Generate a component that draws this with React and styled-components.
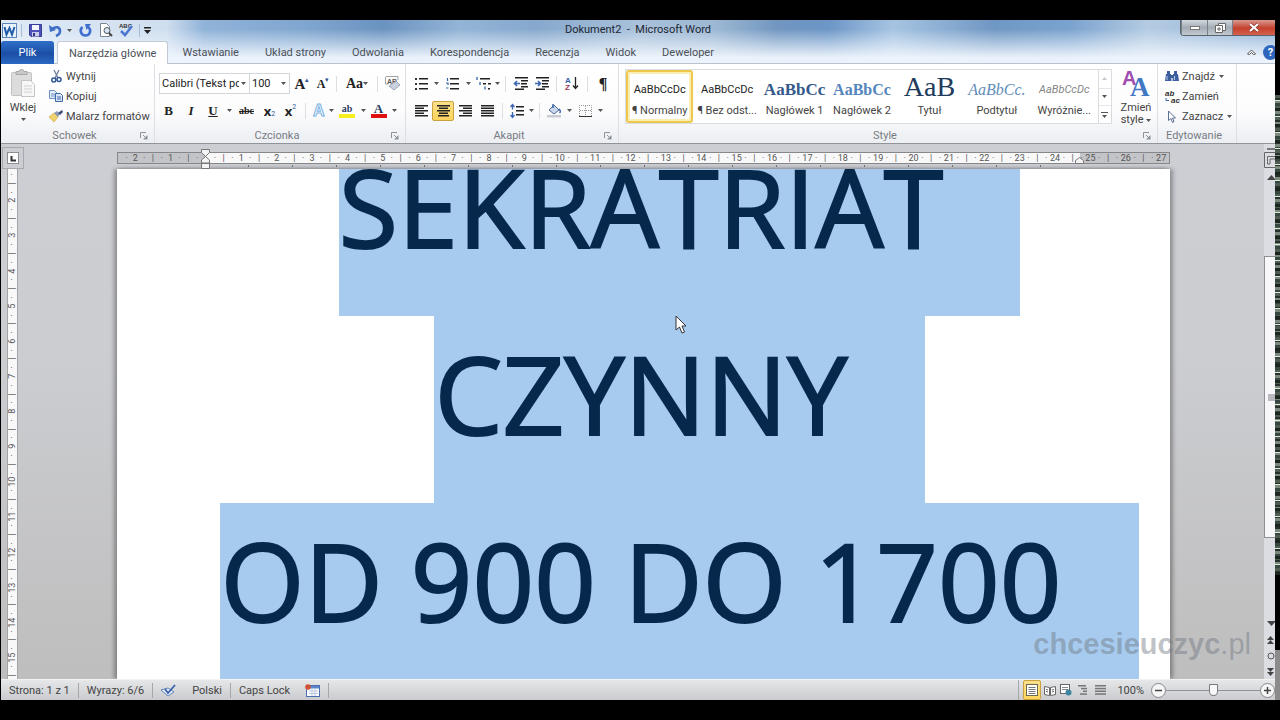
import React, { useState } from 'react'
import styled, { createGlobalStyle, css } from 'styled-components'

const Caret = () => (
    <svg width="5" height="3" viewBox="0 0 5 3"><path d="M0 0h5L2.5 3z" fill="#555" /></svg>
)

const LauncherIcon = () => (
    <svg width="8" height="8" viewBox="0 0 8 8" fill="none" stroke="#8d939b">
        <path d="M.5 6V.5H6M3 3l3 3" /><path d="M7.5 3v4.5H3z" fill="#8d939b" stroke="none" />
    </svg>
)

const lines = (rows, color = '#222') => rows.map(([x, y, w]) => (
    <rect key={`${x}-${y}`} x={x} y={y} width={w} height="1.5" fill={color} />
))

const icons = {
    word: (
        <svg width="15" height="15" viewBox="0 0 15 15">
            <rect x=".5" y=".5" width="14" height="14" fill="#e9f3fc" stroke="#5b86bd" />
            <path d="M2.500 4l2 7.500L7.500 5l2.500 6.500L12.500 4" fill="none" stroke="#1f5ca8" strokeWidth="2" />
        </svg>
    ),
    save: (
        <svg width="13" height="13" viewBox="0 0 13 13">
            <path d="M.5.5h12v12H2l-1.500-1.500z" fill="#4d53b8" stroke="#363b94" />
            <rect x="3" y="1" width="7" height="5" fill="#f4f6ff" />
            <rect x="3" y="8" width="7" height="4.500" fill="#c9cdea" /><rect x="4" y="9" width="2" height="3" fill="#32387f" />
        </svg>
    ),
    undo: (
        <svg width="13" height="13" viewBox="0 0 13 13">
            <path d="M3 5c4-3 8-2 8 2 0 2-1.500 4-4 5" fill="none" stroke="#3f6fc6" strokeWidth="2.600" />
            <path d="M0 1l1 7 6-2z" fill="#3f6fc6" />
        </svg>
    ),
    redo: (
        <svg width="13" height="13" viewBox="0 0 13 13">
            <path d="M3.500 3C0 6 2 11.500 6.500 11.500S13 6 9 3" fill="none" stroke="#3f6fd0" strokeWidth="2.600" />
            <path d="M6 0h6l-4.500 6z" fill="#3f6fd0" />
        </svg>
    ),
    preview: (
        <svg width="14" height="14" viewBox="0 0 14 14">
            <path d="M1.500.5h6l3 3v10h-9z" fill="#fff" stroke="#7b8494" />
            <circle cx="8" cy="7.500" r="3" fill="#d4e6f7" stroke="#555" /><path d="M10 10l3 3" stroke="#444" strokeWidth="2" />
        </svg>
    ),
    spell: (
        <svg width="15" height="14" viewBox="0 0 15 14">
            <text x="1" y="5" fontSize="6" fontWeight="700" fontFamily="Liberation Sans" fill="#333">ABC</text>
            <path d="M3 8l4 4 7-9" fill="none" stroke="#4d78cf" strokeWidth="2.500" />
        </svg>
    ),
    paste: (
        <svg width="26" height="29" viewBox="0 0 26 29">
            <rect x="1.500" y="3.500" width="20" height="23" rx="1" fill="#dcdcdc" stroke="#c2c2c2" />
            <path d="M6 5.500h11v-3h-3a2.500 2 0 0 0-5 0H6z" fill="#c9c9c9" stroke="#a8a8a8" />
            <path d="M11.500 11.500h9l4 4v12h-13z" fill="#f7f7f7" stroke="#c4c4c4" />
            <path d="M14 17h8M14 20h8M14 23h8" stroke="#d0d0d0" />
        </svg>
    ),
    cut: (
        <svg width="11" height="13" viewBox="0 0 11 13" fill="none">
            <path d="M3 0l4 8M8 0L4 8" stroke="#6d7f99" strokeWidth="1.300" />
            <circle cx="2.800" cy="10" r="2" stroke="#2f5597" strokeWidth="1.500" /><circle cx="8" cy="9.500" r="2" stroke="#2f5597" strokeWidth="1.500" />
        </svg>
    ),
    copy: (
        <svg width="14" height="12" viewBox="0 0 14 12">
            <path d="M.5.5h5l2 2v6h-7z" fill="#e4eefb" stroke="#6c8fc6" /><path d="M2 4h4M2 6h4" stroke="#6c8fc6" />
            <path d="M6.500 3.500h5l2 2v6h-7z" fill="#dbe8fa" stroke="#3f66a8" /><path d="M8 7h4M8 9h4" stroke="#3f66a8" />
        </svg>
    ),
    painter: (
        <svg width="14" height="12" viewBox="0 0 14 12">
            <path d="M0 7l5-4 4 4-4 5z" fill="#f1d36b" stroke="#c79f34" strokeWidth=".6" />
            <path d="M5 3l3-2 3 3-2 3z" fill="#8e99b8" /><path d="M9 3l4-3 1 2-3 3z" fill="#3d4c77" />
        </svg>
    ),
    clear: (
        <svg width="16" height="15" viewBox="0 0 16 15">
            <text x="2" y="8" fontSize="7" fontWeight="700" fontFamily="Liberation Sans" fill="#555">AB</text>
            <path d="M4 10l7-5 4 4-6 5z" fill="#c9d0de" stroke="#8b95aa" strokeWidth=".8" /><path d="M.5 1v7h3M1 .5h12V4" fill="none" stroke="#8b8b8b" strokeWidth=".8" />
        </svg>
    ),
    bullets: (
        <svg width="13" height="12" viewBox="0 0 13 12">
            <rect y="0" width="2" height="2" fill="#333" /><rect y="5" width="2" height="2" fill="#333" /><rect y="10" width="2" height="2" fill="#333" />
            {lines([[4, 0, 9], [4, 5, 9], [4, 10, 9]])}
        </svg>
    ),
    numbering: (
        <svg width="13" height="12" viewBox="0 0 13 12">
            <path d="M1.500 0v3M0 5h2v2M0 10h2.500" stroke="#3762a8" fill="none" strokeWidth="1.200" />
            {lines([[4, 0, 9], [4, 5, 9], [4, 10, 9]])}
        </svg>
    ),
    multilevel: (
        <svg width="15" height="13" viewBox="0 0 15 13">
            <path d="M1 0v3M4 5v3M9 9.500v3" stroke="#3762a8" strokeWidth="1.300" />
            {lines([[4, 1, 10], [7, 6, 3], [12, 6, 3], [12, 11, 2]])}
        </svg>
    ),
    outdent: (
        <svg width="15" height="13" viewBox="0 0 15 13">
            {lines([[1, 0, 13], [7, 3, 7], [7, 6, 6], [7, 9, 7], [1, 11.500, 9]])}
            <path d="M6 6.500H1M3 4L.5 6.500 3 9" stroke="#3c66b0" fill="none" strokeWidth="1.600" />
        </svg>
    ),
    indent: (
        <svg width="15" height="13" viewBox="0 0 15 13">
            {lines([[1, 0, 13], [7, 3, 7], [7, 6, 6], [7, 9, 7], [1, 11.500, 9]])}
            <path d="M0 6.500h5M3 4l2.500 2.500L3 9" stroke="#3c66b0" fill="none" strokeWidth="1.600" />
        </svg>
    ),
    sort: (
        <svg width="14" height="15" viewBox="0 0 14 15">
            <text x="0" y="7" fontSize="8" fontWeight="700" fontFamily="Liberation Sans" fill="#3762a8">A</text>
            <text x="0" y="14" fontSize="8" fontWeight="700" fontFamily="Liberation Sans" fill="#9a3450">Z</text>
            <path d="M10.500 1v11M8 9.500l2.500 3 2.500-3" stroke="#222" strokeWidth="1.300" fill="none" />
        </svg>
    ),
    left: <svg width="13" height="12" viewBox="0 0 13 12">{lines([[0, 0, 13], [0, 2.500, 9], [0, 5, 13], [0, 7.500, 9], [0, 10, 13]])}</svg>,
    center: <svg width="13" height="12" viewBox="0 0 13 12">{lines([[0, 0, 13], [2, 2.500, 9], [0, 5, 13], [2, 7.500, 9], [1, 10, 11]])}</svg>,
    right: <svg width="13" height="12" viewBox="0 0 13 12">{lines([[0, 0, 13], [4, 2.500, 9], [0, 5, 13], [4, 7.500, 9], [0, 10, 13]])}</svg>,
    justify: <svg width="13" height="12" viewBox="0 0 13 12">{lines([[0, 0, 13], [0, 2.500, 13], [0, 5, 13], [0, 7.500, 13], [0, 10, 13]])}</svg>,
    spacing: (
        <svg width="14" height="14" viewBox="0 0 14 14">
            <path d="M2.500 1v4.500M.5 3l2-2.500 2 2.500M2.500 8v5M.5 11l2 2.500 2-2.500" stroke="#3c66b0" fill="none" strokeWidth="1.300" />
            {lines([[6, 2, 8], [6, 6, 8], [6, 10, 8]])}
        </svg>
    ),
    bucket: (
        <svg width="16" height="15" viewBox="0 0 16 15">
            <path d="M3 7l5-5 5 5-5 4z" fill="#c8d6ec" stroke="#54698f" /><path d="M7 5V1M13 6c2 2 1.500 3 .5 4" stroke="#3c66b0" fill="none" strokeWidth="1.500" />
            <rect x="1" y="12" width="14" height="2.500" fill="#c8ccd2" />
        </svg>
    ),
    border: (
        <svg width="13" height="12" viewBox="0 0 13 12" fill="none">
            <path d="M.5 11V.5h12V11M6.500 1v10M1 5.500h11" stroke="#999" strokeDasharray="1 1" /><path d="M0 11.500h13" stroke="#333" />
        </svg>
    ),
    changeStyles: (
        <svg width="28" height="29" viewBox="0 0 28 29">
            <text x="0" y="16" fontSize="20" fontWeight="700" fontFamily="Liberation Sans" fill="#a04cb0">A</text>
            <text x="8" y="27" fontSize="27" fontWeight="700" fontFamily="Liberation Serif" fill="#4178c4">A</text>
        </svg>
    ),
    find: (
        <svg width="14" height="12" viewBox="0 0 14 12" fill="#3d5f9e">
            <path d="M2 1h3v3H2zM9 1h3v3H9zM1 4h5l.5 7H0zM8 4h5l1 7H7.500zM5 5h4v3H5z" />
            <path d="M2 6v4M9.500 6v4" stroke="#b8cbe8" />
        </svg>
    ),
    replace: (
        <svg width="15" height="13" viewBox="0 0 15 13">
            <text x="0" y="6" fontSize="8" fontWeight="700" fontFamily="Liberation Sans" fill="#333">ab</text>
            <text x="6" y="13" fontSize="8" fontWeight="700" fontFamily="Liberation Sans" fill="#333">ac</text>
            <path d="M1 8v2.500h3" stroke="#3c66b0" fill="none" />
        </svg>
    ),
    select: (
        <svg width="11" height="13" viewBox="0 0 11 13">
            <path d="M1.500 1v9.500l2.500-2 1.500 4 1.500-.8-1.500-3.700h3z" fill="#fff" stroke="#5a6f94" />
        </svg>
    ),
    proof: (
        <svg width="16" height="13" viewBox="0 0 16 13">
            <path d="M0 6l7-2 6 4-6 4z" fill="#e8effa" stroke="#6482b8" /><path d="M4 5l3 4 7-8" fill="none" stroke="#3c62ae" strokeWidth="1.800" />
        </svg>
    ),
    macro: (
        <svg width="15" height="13" viewBox="0 0 15 13">
            <rect x="1.500" y="1.500" width="13" height="11" fill="#fff" stroke="#4a6fae" /><rect x="2" y="2" width="12" height="2.500" fill="#5b86cc" />
            <path d="M4 7h9M4 9.500h9M7 5v7M10 5v7" stroke="#b9c8e0" /><circle cx="3" cy="3" r="2.800" fill="#cf5236" />
        </svg>
    ),
    viewPrint: (
        <svg width="12" height="12" viewBox="0 0 12 12">
            <rect x=".5" y=".5" width="11" height="11" fill="#fff" stroke="#6e6a50" /><path d="M2.500 3.500h7M2.500 5.500h7M2.500 7.500h7M2.500 9.500h7" stroke="#777" />
        </svg>
    ),
    viewRead: (
        <svg width="12" height="11" viewBox="0 0 12 11" fill="#fff" stroke="#666">
            <path d="M.5 1.500l5 1v8l-5-1zM11.500 1.500l-5 1v8l5-1z" /><path d="M2 4.500l2 .5M2 6.500l2 .5M10 4.500L8 5M10 6.500L8 7" />
        </svg>
    ),
    viewWeb: (
        <svg width="12" height="12" viewBox="0 0 12 12">
            <rect x=".5" y=".5" width="9" height="9" fill="#fff" stroke="#666" /><path d="M2 3.500h6M2 5.500h6" stroke="#888" /><circle cx="8.500" cy="8.500" r="3" fill="#3e86a0" />
        </svg>
    ),
    viewOutline: <svg width="10" height="10" viewBox="0 0 10 10">{lines([[0, 0, 8], [3, 2.800, 6], [5, 5.500, 4], [2, 8.300, 7]], '#777')}</svg>,
    viewDraft: <svg width="11" height="10" viewBox="0 0 11 10">{lines([[0, 0, 11], [0, 2.800, 11], [0, 5.500, 11], [0, 8.300, 11]], '#777')}</svg>,
}

const tabs = ['Narzędzia główne', 'Wstawianie', 'Układ strony', 'Odwołania', 'Korespondencja', 'Recenzja', 'Widok', 'Deweloper']

const gallery = [
    { name: '¶ Normalny', sample: 'AaBbCcDc' },
    { name: '¶ Bez odst...', sample: 'AaBbCcDc' },
    { name: 'Nagłówek 1', sample: 'AaBbCc', kind: 'h1' },
    { name: 'Nagłówek 2', sample: 'AaBbCc', kind: 'h2' },
    { name: 'Tytuł', sample: 'AaB', kind: 'title' },
    { name: 'Podtytuł', sample: 'AaBbCc.', kind: 'subtitle' },
    { name: 'Wyróżnie...', sample: 'AaBbCcDc', kind: 'emphasis' },
]

const documentLines = ['SEKRATRIAT', 'CZYNNY', 'OD 900 DO 1700']

// ruler marks stand every quarter of a centimetre
const rulerMarks = (from, to) => {
    const marks = []
    for (let q = from * 4; q <= to * 4; q++) {
        if (q === 0) marks.push('')
        else if (q % 4 === 0) marks.push(String(Math.abs(q / 4)))
        else marks.push(q % 2 === 0 ? '|' : '·')
    }
    return marks
}

function Tool({ label, width, active, children }) {
    return <ToolButton type="button" aria-label={label} title={label} $w={width} $active={active}>{children}</ToolButton>
}

function Combo({ label, value, width }) {
    return (
        <ComboBox $w={width}>
            <select aria-label={label} defaultValue={value}><option>{value}</option></select>
            <Caret />
        </ComboBox>
    )
}

function Group({ title, width, grow, launcher = true, children }) {
    return (
        <GroupBox $w={width} $grow={grow}>
            <GroupBody>{children}</GroupBody>
            <GroupFooter>
                <span>{title}</span>
                {launcher && <Launcher type="button" aria-label={`${title}: więcej opcji`}><LauncherIcon /></Launcher>}
            </GroupFooter>
        </GroupBox>
    )
}

function TitleBar() {
    return (
        <TitleRow>
            <QuickAccess>
                {icons.word}
                <QuickSeparator />
                <Tool label="Zapisz" width={19}>{icons.save}</Tool>
                <Tool label="Cofnij" width={20}>{icons.undo}</Tool>
                <Tool label="Lista cofania" width={8}><Caret /></Tool>
                <Tool label="Powtórz" width={24}>{icons.redo}</Tool>
                <Tool label="Podgląd wydruku" width={18}>{icons.preview}</Tool>
                <Tool label="Pisownia" width={20}>{icons.spell}</Tool>
                <QuickSeparator />
                <Tool label="Dostosuj" width={7}>
                    <svg width="7" height="7" viewBox="0 0 7 7"><path d="M0 0h7v1.500H0zM0 3h7L3.500 7z" fill="#222" /></svg>
                </Tool>
            </QuickAccess>
            <Title>Dokument2&nbsp; -&nbsp; Microsoft Word</Title>
            <WindowButtons>
                <WindowButton type="button" aria-label="Minimalizuj" $w={26}>
                    <svg width="10" height="4" viewBox="0 0 10 4"><rect x=".5" y=".5" width="9" height="3" fill="#fff" stroke="#777" /></svg>
                </WindowButton>
                <WindowButton type="button" aria-label="Przywróć" $w={25}>
                    <svg width="11" height="10" viewBox="0 0 11 10" fill="#fff" stroke="#666"><path d="M3.500.5h7v7h-7z" /><path d="M.5 2.500h7v7h-7z" /><path d="M3 5h2v2H3z" /></svg>
                </WindowButton>
                <WindowButton type="button" aria-label="Zamknij" $w={43} $close>
                    <svg width="10" height="9" viewBox="0 0 10 9"><path d="M1 1l8 7M9 1L1 8" stroke="#803028" strokeWidth="3.500" /><path d="M1 1l8 7M9 1L1 8" stroke="#fff" strokeWidth="2.200" /></svg>
                </WindowButton>
            </WindowButtons>
        </TitleRow>
    )
}

function Ribbon() {
    const [style, setStyle] = useState(gallery[0].name)

    return (
        <RibbonBar>
            <Group title="Schowek" width={154}>
                <BigButton type="button" $w={38}>{icons.paste}<span>Wklej</span><Caret /></BigButton>
                <ButtonStack>
                    <TextButton type="button"><i>{icons.cut}</i>Wytnij</TextButton>
                    <TextButton type="button"><i>{icons.copy}</i>Kopiuj</TextButton>
                    <TextButton type="button"><i>{icons.painter}</i>Malarz formatów</TextButton>
                </ButtonStack>
            </Group>

            <Group title="Czcionka" width={251}>
                <ToolRows>
                    <ToolRow $indent={4}>
                        <Combo label="Czcionka" value="Calibri (Tekst podstawowy)" width={91} />
                        <Combo label="Rozmiar czcionki" value="100" width={41} />
                        <Tool label="Zwiększ czcionkę" width={24}><Glyph $size={15}>A</Glyph><sup>▴</sup></Tool>
                        <Tool label="Zmniejsz czcionkę" width={18}><Glyph $size={12}>A</Glyph><sup>▾</sup></Tool>
                        <Separator />
                        <Tool label="Zmień wielkość liter" width={32}><Glyph $size={14}>Aa</Glyph><Caret /></Tool>
                        <Separator />
                        <Tool label="Wyczyść formatowanie" width={21}>{icons.clear}</Tool>
                    </ToolRow>
                    <ToolRow $indent={2}>
                        <Tool label="Pogrubienie" width={23}><Glyph $size={13}>B</Glyph></Tool>
                        <Tool label="Kursywa" width={22}><Glyph $size={13} $italic>I</Glyph></Tool>
                        <Tool label="Podkreślenie" width={22}><Glyph $size={13} $line="underline">U</Glyph></Tool>
                        <Tool label="Styl podkreślenia" width={10}><Caret /></Tool>
                        <Tool label="Przekreślenie" width={25}><Glyph $size={10} $line="line-through">abc</Glyph></Tool>
                        <Tool label="Indeks dolny" width={21}><Glyph $size={13} $sans>x</Glyph><sub>2</sub></Tool>
                        <Tool label="Indeks górny" width={21}><Glyph $size={13} $sans>x</Glyph><sup>2</sup></Tool>
                        <Separator />
                        <Tool label="Efekty tekstowe" width={17}>
                            <svg width="14" height="15" viewBox="0 0 14 15"><text x="1" y="13" fontSize="16" fontFamily="Liberation Sans" fontWeight="700" fill="#fff" stroke="#7ab2e4">A</text></svg>
                        </Tool>
                        <Tool label="Lista efektów" width={8}><Caret /></Tool>
                        <Tool label="Kolor wyróżnienia" width={24}><ColorMark $color="#f5ee1c" $small>ab</ColorMark></Tool>
                        <Tool label="Lista wyróżnień" width={8}><Caret /></Tool>
                        <Tool label="Kolor czcionki" width={23}><ColorMark $color="#e01010">A</ColorMark></Tool>
                        <Tool label="Lista kolorów" width={8}><Caret /></Tool>
                    </ToolRow>
                </ToolRows>
            </Group>

            <Group title="Akapit" width={213}>
                <ToolRows>
                    <ToolRow $indent={5}>
                        <Tool label="Punktory" width={20}>{icons.bullets}</Tool>
                        <Tool label="Lista punktorów" width={10}><Caret /></Tool>
                        <Tool label="Numerowanie" width={22}>{icons.numbering}</Tool>
                        <Tool label="Lista numerowania" width={10}><Caret /></Tool>
                        <Tool label="Lista wielopoziomowa" width={20}>{icons.multilevel}</Tool>
                        <Tool label="Więcej list" width={8}><Caret /></Tool>
                        <Separator />
                        <Tool label="Zmniejsz wcięcie" width={22}>{icons.outdent}</Tool>
                        <Tool label="Zwiększ wcięcie" width={20}>{icons.indent}</Tool>
                        <Separator />
                        <Tool label="Sortuj" width={22}>{icons.sort}</Tool>
                        <Separator />
                        <Tool label="Pokaż wszystko" width={22}><Glyph $size={16}>¶</Glyph></Tool>
                    </ToolRow>
                    <ToolRow $indent={4}>
                        <Tool label="Do lewej" width={22}>{icons.left}</Tool>
                        <Tool label="Do środka" width={22} active>{icons.center}</Tool>
                        <Tool label="Do prawej" width={22}>{icons.right}</Tool>
                        <Tool label="Wyjustuj" width={22}>{icons.justify}</Tool>
                        <Separator />
                        <Tool label="Odstępy" width={20}>{icons.spacing}</Tool>
                        <Tool label="Lista odstępów" width={8}><Caret /></Tool>
                        <Separator />
                        <Tool label="Cieniowanie" width={20}>{icons.bucket}</Tool>
                        <Tool label="Lista cieniowania" width={10}><Caret /></Tool>
                        <Tool label="Krawędzie" width={22}>{icons.border}</Tool>
                        <Tool label="Lista krawędzi" width={8}><Caret /></Tool>
                    </ToolRow>
                </ToolRows>
            </Group>

            <Group title="Style" width={539} grow>
                <Gallery>
                    {gallery.map((item) => (
                        <StyleCard key={item.name} type="button" $active={item.name === style} onClick={() => setStyle(item.name)}>
                            <Sample $kind={item.kind}>{item.sample}</Sample>
                            <span>{item.name}</span>
                        </StyleCard>
                    ))}
                    <GalleryScroll>
                        <button type="button" aria-label="W górę"><svg width="5" height="3" viewBox="0 0 5 3"><path d="M0 3h5L2.500 0z" fill="#c5c8cc" /></svg></button>
                        <button type="button" aria-label="W dół"><Caret /></button>
                        <button type="button" aria-label="Więcej"><svg width="7" height="6" viewBox="0 0 7 6"><path d="M0 0h7v1H0zM1 3h5L3.500 6z" fill="#555" /></svg></button>
                    </GalleryScroll>
                </Gallery>
                <BigButton type="button" $w={42}>{icons.changeStyles}<span>Zmień<br />style <Caret /></span></BigButton>
            </Group>

            <Group title="Edytowanie" width={79} launcher={false}>
                <ButtonStack>
                    <TextButton type="button"><i>{icons.find}</i>Znajdź <Caret /></TextButton>
                    <TextButton type="button"><i>{icons.replace}</i>Zamień</TextButton>
                    <TextButton type="button"><i>{icons.select}</i>Zaznacz <Caret /></TextButton>
                </ButtonStack>
            </Group>
        </RibbonBar>
    )
}

function Workspace() {
    return (
        <Desk>
            <SideColumn>
                <TabStop type="button" aria-label="Tabulator lewy">
                    <svg width="12" height="12" viewBox="0 0 12 12"><rect x=".5" y=".5" width="11" height="11" fill="#fff" stroke="#8c8e92" /><path d="M4.500 4v4.500H9" fill="none" stroke="#333" strokeWidth="2" /></svg>
                </TabStop>
                <SideRuler>{rulerMarks(1.25, 15.5).map((m, i) => <span key={i}>{m}</span>)}</SideRuler>
            </SideColumn>
            <Canvas>
                <TopRuler>
                    <RulerScale>
                        {rulerMarks(-2.25, 27).map((m, i) => <span key={i}>{m}</span>)}
                        <IndentMarker $at="8.4%">
                            <svg width="9" height="20" viewBox="0 0 9 20" fill="#f4f4f4" stroke="#777">
                                <path d="M.5.5h8v3l-4 4-4-4zM.5 14v-3l4-3.500 4 3.500v3zM.5 14.500h8v5h-8z" />
                            </svg>
                        </IndentMarker>
                        <IndentMarker $at="91.5%" $low>
                            <svg width="9" height="7" viewBox="0 0 9 7" fill="#f4f4f4" stroke="#777"><path d="M.5 6.500v-3l4-3 4 3v3z" /></svg>
                        </IndentMarker>
                    </RulerScale>
                    <TabTicks />
                </TopRuler>
                <Page>
                    {documentLines.map((line) => <Paragraph key={line}><span>{line}</span></Paragraph>)}
                </Page>
                <Pointer width="12" height="19" viewBox="0 0 12 19">
                    <path d="M1 1v14l3.500-3 2.500 6 2.500-1-2.500-6H11z" fill="#fff" stroke="#333" />
                </Pointer>
            </Canvas>
            <ScrollBar>
                <SplitHandle />
                <svg width="11" height="16" viewBox="0 0 11 16" fill="none" stroke="#666"><path d="M11 .5H.5v15H11M11 4.500H3.500V12H6V7h5" /></svg>
                <ScrollButton type="button" aria-label="Przewiń w górę"><svg width="9" height="5" viewBox="0 0 9 5"><path d="M0 5h9L4.500 0z" fill="#444" /></svg></ScrollButton>
                <Track $grow={70} />
                <Thumb $grow={290}><span /></Thumb>
                <Track $grow={77} />
                <ScrollButton type="button" aria-label="Przewiń w dół"><svg width="9" height="5" viewBox="0 0 9 5"><path d="M0 0h9L4.500 5z" fill="#444" /></svg></ScrollButton>
                <ScrollButton type="button" aria-label="Poprzednia strona"><svg width="7" height="8" viewBox="0 0 7 8"><path d="M0 4h7L3.500 0zM0 8h7L3.500 4z" fill="#444" /></svg></ScrollButton>
                <ScrollButton type="button" aria-label="Wybierz obiekt"><svg width="8" height="8" viewBox="0 0 8 8"><circle cx="4" cy="4" r="3" fill="none" stroke="#555" /></svg></ScrollButton>
                <ScrollButton type="button" aria-label="Następna strona"><svg width="7" height="8" viewBox="0 0 7 8"><path d="M0 0h7L3.500 4zM0 4h7L3.500 8z" fill="#444" /></svg></ScrollButton>
            </ScrollBar>
            <Watermark><b>chcesieuczyc</b>.pl</Watermark>
        </Desk>
    )
}

function StatusBar() {
    const [zoom, setZoom] = useState(100)

    return (
        <Status>
            <StatusItem type="button">Strona: 1 z 1</StatusItem>
            <StatusItem type="button">Wyrazy: 6/6</StatusItem>
            <StatusItem type="button" $plain aria-label="Sprawdzanie">{icons.proof}</StatusItem>
            <StatusItem type="button">Polski</StatusItem>
            <StatusItem type="button" $plain>Caps Lock</StatusItem>
            <StatusItem type="button" aria-label="Makro">{icons.macro}</StatusItem>
            <ViewButtons>
                <Tool label="Układ wydruku" width={18} active>{icons.viewPrint}</Tool>
                <Tool label="Czytanie" width={17}>{icons.viewRead}</Tool>
                <Tool label="Układ sieci Web" width={16}>{icons.viewWeb}</Tool>
                <Tool label="Konspekt" width={18}>{icons.viewOutline}</Tool>
                <Tool label="Wersja robocza" width={17}>{icons.viewDraft}</Tool>
            </ViewButtons>
            <ZoomValue type="button">{zoom}%</ZoomValue>
            <RoundButton type="button" aria-label="Pomniejsz" onClick={() => setZoom(Math.max(10, zoom - 10))}>
                <svg width="7" height="7" viewBox="0 0 7 7"><path d="M0 3.500h7" stroke="#444" strokeWidth="1.500" /></svg>
            </RoundButton>
            <ZoomSlider type="range" aria-label="Powiększenie" min="10" max="190" value={zoom} onChange={(e) => setZoom(Number(e.target.value))} />
            <RoundButton type="button" aria-label="Powiększ" onClick={() => setZoom(Math.min(190, zoom + 10))}>
                <svg width="7" height="7" viewBox="0 0 7 7"><path d="M0 3.500h7M3.500 0v7" stroke="#444" strokeWidth="1.500" /></svg>
            </RoundButton>
        </Status>
    )
}

function App() {
    return (
        <Screen>
            <GlobalStyle />
            <Window>
                <Chrome>
                    <TitleBar />
                    <TabRow>
                        <FileTab type="button">Plik</FileTab>
                        {tabs.map((tab, i) => <RibbonTab key={tab} type="button" $active={i === 0}>{tab}</RibbonTab>)}
                        <TabTools>
                            <Tool label="Minimalizuj Wstążkę" width={20}>
                                <svg width="9" height="6" viewBox="0 0 9 6"><path d="M.5 5L4.500 1l4 4-2 .5-2-2-2 2z" fill="#fff" stroke="#555" /></svg>
                            </Tool>
                            <HelpButton type="button" aria-label="Pomoc">?</HelpButton>
                        </TabTools>
                    </TabRow>
                </Chrome>
                <Ribbon />
                <Workspace />
                <StatusBar />
            </Window>
            <Edge><Noise /><Dark /><Pale /></Edge>
        </Screen>
    )
}

export default App

const GlobalStyle = createGlobalStyle`
    * {
        box-sizing: border-box;
    }

    body {
        margin: 0;
        background: #000;
        font-family: Roboto, "Noto Sans", sans-serif;
        font-size: 11px;
        color: #444;
    }

    button, select, input {
        margin: 0;
        padding: 0;
        border: 0;
        background: none;
        font: inherit;
        color: inherit;
    }

    svg {
        flex-shrink: 0;
        overflow: visible;
    }
`

const Screen = styled.div`
    height: 100vh;
    padding: 20px 0 20px 1px;
    display: flex;
    overflow: hidden;
`

const Window = styled.div`
    flex: 1;
    min-width: 0;
    display: flex;
    flex-direction: column;
`

const Chrome = styled.header`
    background:
        linear-gradient(to bottom, rgba(240, 246, 253, 0) 20%, rgba(240, 246, 253, 0.950) 85%),
        linear-gradient(to right, #dfeaf6 0, #cfdeef 13%, #8fb2d8 16%, #7fa6cf 24%, #6b93c0 30%, #92b4d6 36%, #86a8cd 42%, #a9c1da 50%, #9db8d4 56%, #7096c0 61%, #6c96c6 65%, #a6c4e2 70%, #6f97c3 78%, #7ba3cf 84%, #b4cbe2 90%, #8fb1d6 100%);
`

const TitleRow = styled.div`
    height: 20px;
    display: grid;
    grid-template-columns: 1fr auto 1fr;
    align-items: center;
`

const QuickAccess = styled.div`
    display: flex;
    align-items: center;
    padding-left: 1px;
`

const QuickSeparator = styled.span`
    width: 1px;
    height: 13px;
    margin: 0 4px;
    background: #a9bdd4;
`

const Title = styled.div`
    color: #1c2733;
    line-height: 18px;
`

const WindowButtons = styled.div`
    display: flex;
    justify-self: end;
    align-self: start;
    border: 1px solid #59646f;
    border-top: 0;
    border-right: 0;
    border-radius: 0 0 0 4px;
    overflow: hidden;
`

const WindowButton = styled.button`
    width: ${(p) => p.$w}px;
    height: 15px;
    display: flex;
    align-items: center;
    justify-content: center;
    border-left: 1px solid #77818c;
    background: ${(p) => (p.$close
        ? 'linear-gradient(#d99a90, #c4402e 55%, #d4624e)'
        : 'linear-gradient(#d3d9df, #a3abb4 50%, #c3c9cf)')};
`

const TabRow = styled.nav`
    height: 24px;
    padding-top: 1px;
    display: flex;
    align-items: stretch;
    border-bottom: 1px solid #b9c2ce;
`

const RibbonTab = styled.button`
    margin-bottom: -1px;
    padding: 0 13px;
    color: #4a5058;
    white-space: nowrap;

    ${(p) => p.$active && css`
        padding: 0 11px;
        margin-right: 1px;
        background: #fff;
        border: 1px solid #c3cad4;
        border-bottom: 0;
        border-radius: 3px 3px 0 0;
    `}
`

const FileTab = styled(RibbonTab)`
    width: 53px;
    padding: 0;
    margin-right: 3px;
    color: #fff;
    background: linear-gradient(#2f6ec9, #1c4fa6 55%, #2b69c4);
    border-radius: 3px 3px 0 0;
`

const TabTools = styled.div`
    margin-left: auto;
    display: flex;
    align-items: center;
    overflow: hidden;
`

const HelpButton = styled.button`
    width: 15px;
    height: 15px;
    margin: 0 -3px 0 2px;
    border-radius: 50%;
    background: #2f66bd;
    color: #fff;
    font-weight: 700;
    line-height: 15px;
`

const RibbonBar = styled.section`
    height: 80px;
    flex-shrink: 0;
    padding-right: 38px;
    display: flex;
    background: linear-gradient(#fff, #fcfcfd 60%, #eceef2);
    border-bottom: 1px solid #8f959c;
`

const GroupBox = styled.div`
    flex: ${(p) => (p.$grow ? 1 : 0)} 0 ${(p) => p.$w}px;
    min-width: 0;
    display: flex;
    flex-direction: column;
    border-right: 1px solid #dcdfe4;
`

const GroupBody = styled.div`
    flex: 1;
    min-height: 0;
    display: flex;
`

const GroupFooter = styled.div`
    height: 15px;
    display: grid;
    grid-template-columns: 8px 1fr 14px;
    align-items: center;
    color: #777c83;
    text-align: center;

    span {
        grid-column: 2;
        line-height: 14px;
    }
`

const Launcher = styled.button`
    height: 8px;
    display: flex;
`

const BigButton = styled.button`
    width: ${(p) => p.$w}px;
    padding-top: 5px;
    margin-left: 3px;
    display: flex;
    flex-direction: column;
    align-items: center;
    line-height: 12px;

    span {
        margin: 4px 0;
    }

    span svg {
        vertical-align: middle;
    }
`

const ButtonStack = styled.div`
    padding: 2px 0 0 6px;
    display: flex;
    flex-direction: column;
`

const TextButton = styled.button`
    height: 20px;
    display: flex;
    align-items: center;
    gap: 2px;
    white-space: nowrap;

    i {
        width: 16px;
        display: flex;
        justify-content: center;
    }

    > svg {
        margin-left: 2px;
    }
`

const ToolRows = styled.div`
    padding-top: 9px;
    display: flex;
    flex-direction: column;
    gap: 6px;
`

const ToolRow = styled.div`
    height: 21px;
    padding-left: ${(p) => p.$indent}px;
    display: flex;
    align-items: center;
`

const ToolButton = styled.button`
    width: ${(p) => p.$w}px;
    height: 20px;
    flex-shrink: 0;
    display: flex;
    align-items: center;
    justify-content: center;
    color: #222;

    sup, sub {
        font-size: 7px;
        line-height: 7px;
        color: #2f5597;
    }

    sup {
        align-self: flex-start;
        margin-top: 3px;
    }

    sub {
        align-self: flex-end;
        margin-bottom: 3px;
    }

    ${(p) => p.$active && css`
        background: linear-gradient(#fbe08a, #fdd45c);
        border: 1px solid #c9a13e;
        border-radius: 2px;
    `}
`

const Glyph = styled.span`
    font-family: ${(p) => (p.$sans ? '"Open Sans", sans-serif' : '"Liberation Serif", serif')};
    font-size: ${(p) => p.$size}px;
    font-weight: 700;
    font-style: ${(p) => (p.$italic ? 'italic' : 'normal')};
    text-decoration: ${(p) => p.$line || 'none'};
    line-height: 16px;
`

const ColorMark = styled.span`
    width: 16px;
    border-bottom: 4px solid ${(p) => p.$color};
    font-family: "Liberation Serif", serif;
    font-size: ${(p) => (p.$small ? 10 : 13)}px;
    font-weight: 700;
    line-height: 11px;
    color: #2c3e62;
`

const Separator = styled.span`
    width: 1px;
    height: 16px;
    margin: 0 4px;
    flex-shrink: 0;
    background: #dcdfe4;
`

const ComboBox = styled.label`
    width: ${(p) => p.$w}px;
    height: 21px;
    padding: 0 3px 0 2px;
    display: flex;
    align-items: center;
    gap: 2px;
    background: #fff;
    border: 1px solid #d3d6db;

    & + & {
        margin-left: -1px;
    }

    select {
        flex: 1;
        min-width: 0;
        appearance: none;
        color: #222;
    }
`

const Gallery = styled.div`
    height: 55px;
    margin: 5px 0 0 6px;
    flex: 1;
    min-width: 0;
    display: flex;
    background: #fff;
    border: 1px solid #d9dce1;
`

const StyleCard = styled.button`
    flex: 1 1 0;
    min-width: 0;
    padding: 0 3px 3px;
    display: flex;
    flex-direction: column;
    justify-content: flex-end;
    align-items: center;
    overflow: hidden;
    white-space: nowrap;
    line-height: 14px;
    border: 2px solid ${(p) => (p.$active ? '#edc84c' : 'transparent')};
    border-radius: 3px;
    box-shadow: ${(p) => (p.$active ? 'inset 0 0 0 2px #fbeeb4' : 'none')};
`

const sampleStyles = {
    h1: css`font: 700 17px/28px "Liberation Serif", serif; color: #34598a;`,
    h2: css`font: 700 16px/28px "Liberation Serif", serif; color: #5585bd;`,
    title: css`font: 28px/34px "Liberation Serif", serif; color: #203a5c;`,
    subtitle: css`font: italic 16px/28px "Liberation Serif", serif; color: #5f8cba;`,
    emphasis: css`font-style: italic; color: #868686;`,
}

const Sample = styled.span`
    color: #222;
    line-height: 28px;
    ${(p) => sampleStyles[p.$kind]}
`

const GalleryScroll = styled.div`
    width: 13px;
    display: grid;
    grid-template-rows: 1fr 1fr 1fr;
    border-left: 1px solid #d9dce1;

    button {
        display: flex;
        align-items: center;
        justify-content: center;
    }

    button + button {
        border-top: 1px solid #e4e6ea;
    }
`

const Desk = styled.main`
    flex: 1;
    min-height: 0;
    position: relative;
    display: flex;
    background: linear-gradient(#cdced3, #cccdd1 40%, #bebebe);
`

const SideColumn = styled.div`
    width: 23px;
    padding-top: 3px;
    display: flex;
    flex-direction: column;
`

const TabStop = styled.button`
    height: 22px;
    margin-left: 1px;
    display: flex;
    align-items: center;
    justify-content: center;
    border: 1px solid #a7a9ad;
`

const SideRuler = styled.div`
    flex: 1;
    min-height: 0;
    width: 11px;
    margin-left: 6px;
    padding: 1px 0 0;
    display: flex;
    flex-direction: column;
    background: #f8f8f9;
    border: solid #a3a5a9;
    border-width: 0 1px;
    font-size: 9px;
    color: #555;

    span {
        flex: 1 1 0;
        min-height: 0;
        display: flex;
        align-items: center;
        justify-content: center;
        line-height: 9px;
        writing-mode: vertical-rl;
        transform: rotate(180deg);
    }
`

const Canvas = styled.div`
    flex: 1;
    min-width: 0;
    padding: 0 94px 0 93px;
    position: relative;
    display: flex;
    flex-direction: column;
    overflow: hidden;
`

const TopRuler = styled.div`
    height: 25px;
    flex-shrink: 0;
    padding-top: 8px;
`

const RulerScale = styled.div`
    height: 12px;
    padding: 0 3px 0 4px;
    position: relative;
    display: flex;
    background: linear-gradient(to right, #c3c4c8 8.4%, #f8f8f9 8.4%, #f8f8f9 91.5%, #c3c4c8 91.5%);
    border: 1px solid #85878b;
    font-size: 9px;
    line-height: 10px;
    color: #555;

    > span {
        flex: 1 1 0;
        min-width: 0;
        display: flex;
        justify-content: center;
    }
`

const IndentMarker = styled.div`
    position: absolute;
    left: ${(p) => p.$at};
    top: ${(p) => (p.$low ? 4 : -4)}px;
    margin-left: -5px;
    line-height: 0;
`

const TabTicks = styled.div`
    height: 2px;
    margin: 1px 96px 0 88px;
    background: repeating-linear-gradient(to right, transparent 0 43px, #777 43px 44px);
`

const Page = styled.article`
    flex: 1;
    min-height: 0;
    overflow: hidden;
    background: #fff;
    box-shadow: -3px 0 4px rgba(0, 0, 0, 0.3), 3px 0 4px rgba(0, 0, 0, 0.3);
    font-family: "Open Sans", sans-serif;
    font-size: 108px;
    color: #06294b;
    -webkit-text-stroke: 2px #06294b;
`

const Paragraph = styled.p`
    margin: 0;
    padding-left: 72px;
    display: flex;
    justify-content: center;
    white-space: nowrap;

    span {
        padding: 0 77px 32px 0;
        background: #a7cbef;
        line-height: 155px;
    }

    /* the document is scrolled past the top of its first line */
    &:first-child {
        margin-top: -40px;
    }
`

const Pointer = styled.svg`
    position: absolute;
    left: 52.5%;
    top: 171px;
`

const ScrollBar = styled.div`
    width: 11px;
    padding-top: 4px;
    display: flex;
    flex-direction: column;
    align-items: stretch;
    gap: 2px;
    background: #dcdde2;
    overflow: hidden;
`

const SplitHandle = styled.div`
    height: 2px;
    margin-left: 3px;
    flex-shrink: 0;
    background: #77797d;
`

const ScrollButton = styled.button`
    height: 14px;
    flex-shrink: 0;
    padding-left: 3px;
    display: flex;
    align-items: center;
`

const Track = styled.div`
    flex: ${(p) => p.$grow} 1 0;
`

const Thumb = styled(Track)`
    display: flex;
    align-items: center;
    background: #f7f7f9;
    border: 1px solid #8e9095;
    border-right: 0;

    span {
        width: 7px;
        height: 7px;
        margin-left: 3px;
        background: #b9babf;
    }
`

const Watermark = styled.div`
    position: absolute;
    right: 24px;
    bottom: 19px;
    font-family: "Liberation Sans", sans-serif;
    font-size: 29px;
    line-height: 32px;
    color: rgba(110, 118, 128, 0.450);
`

const Status = styled.footer`
    height: 21px;
    flex-shrink: 0;
    display: flex;
    align-items: center;
    overflow: hidden;
    background: linear-gradient(#e6e7e9, #c9cbce);
    border-top: 1px solid #f2f2f3;
`

const StatusItem = styled.button`
    height: 15px;
    padding: 0 ${(p) => (p.$plain ? 6 : 8)}px 0 8px;
    display: flex;
    align-items: center;
    white-space: nowrap;
    border-right: 1px solid ${(p) => (p.$plain ? 'transparent' : '#a5a7ab')};
`

const ViewButtons = styled.div`
    margin-left: auto;
    padding-left: 4px;
    display: flex;
    align-items: center;
    border-left: 1px solid #a5a7ab;
`

const ZoomValue = styled.button`
    margin: 0 7px 0 8px;
`

const RoundButton = styled.button`
    width: 15px;
    height: 15px;
    flex-shrink: 0;
    display: flex;
    align-items: center;
    justify-content: center;
    background: #f6f6f7;
    border: 1px solid #85878b;
    border-radius: 50%;
`

const ZoomSlider = styled.input`
    width: 94px;
    height: 15px;
    appearance: none;
    background: linear-gradient(#909297, #909297) center / 100% 1px no-repeat;

    &::-webkit-slider-thumb {
        appearance: none;
        width: 9px;
        height: 12px;
        background: #f8f8f9;
        border: 1px solid #77797d;
        border-radius: 1px 1px 5px 5px;
    }
`

const Edge = styled.div`
    width: 5px;
    padding-top: 75px;
    display: flex;
    flex-direction: column;
`

const Noise = styled.div`
    flex: 480;
    background:
        repeating-linear-gradient(transparent 0 5px, #dfeadb 5px 6px, transparent 6px 13px, #1b241f 13px 16px),
        repeating-linear-gradient(#4e5c52 0 3px, #27302b 3px 5px, #7c8a7d 5px 8px, #354740 8px 11px);
`

const Dark = styled.div`
    flex: 75;
    background: #000;
`

const Pale = styled.div`
    flex: 50;
    background: #8b8b8b;
`
